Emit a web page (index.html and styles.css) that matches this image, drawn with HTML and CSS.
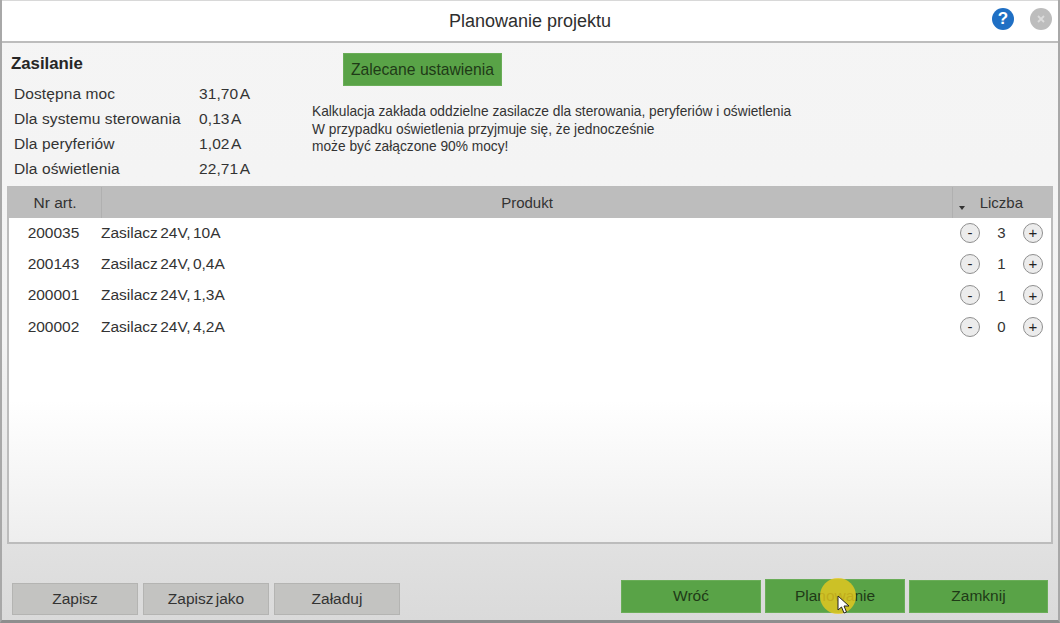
FILE: index.html
```html
<!DOCTYPE html>
<html lang="pl">
<head>
  <meta charset="UTF-8">
  <title>Planowanie projektu</title>
  <link rel="stylesheet" href="styles.css">
</head>
<body>
  <div class="window">
    <div class="titlebar">
      <span class="title">Planowanie projektu</span>
      <div class="title-icons">
        <span class="help-btn">?</span>
        <span class="close-btn">
          <svg width="12" height="12" viewBox="0 0 12 12"><path d="M3 3 L9 9 M9 3 L3 9" stroke="#dcdcdc" stroke-width="1.8"/></svg>
        </span>
      </div>
    </div>

    <div class="info">
      <div class="power">
        <h3>Zasilanie</h3>
        <div class="power-row"><span class="power-label">Dostępna moc</span><span class="power-value">31,70 A</span></div>
        <div class="power-row"><span class="power-label">Dla systemu sterowania</span><span class="power-value">0,13 A</span></div>
        <div class="power-row"><span class="power-label">Dla peryferiów</span><span class="power-value">1,02 A</span></div>
        <div class="power-row"><span class="power-label">Dla oświetlenia</span><span class="power-value">22,71 A</span></div>
      </div>
      <div class="notes">
        <button class="btn-green btn-recommended">Zalecane ustawienia</button>
        <p>Kalkulacja zakłada oddzielne zasilacze dla sterowania, peryferiów i oświetlenia<br>W przypadku oświetlenia przyjmuje się, że jednocześnie<br>może być załączone 90% mocy!</p>
      </div>
    </div>

    <div class="table">
      <div class="table-head">
        <div class="col-nr">Nr art.</div>
        <div class="col-product">Produkt</div>
        <div class="col-count"><span class="sort-arrow"></span>Liczba</div>
      </div>
      <div class="table-row">
        <div class="col-nr">200035</div>
        <div class="col-product">Zasilacz 24V, 10A</div>
        <div class="col-count"><span class="round-btn">-</span><span class="qty">3</span><span class="round-btn">+</span></div>
      </div>
      <div class="table-row">
        <div class="col-nr">200143</div>
        <div class="col-product">Zasilacz 24V, 0,4A</div>
        <div class="col-count"><span class="round-btn">-</span><span class="qty">1</span><span class="round-btn">+</span></div>
      </div>
      <div class="table-row">
        <div class="col-nr">200001</div>
        <div class="col-product">Zasilacz 24V, 1,3A</div>
        <div class="col-count"><span class="round-btn">-</span><span class="qty">1</span><span class="round-btn">+</span></div>
      </div>
      <div class="table-row">
        <div class="col-nr">200002</div>
        <div class="col-product">Zasilacz 24V, 4,2A</div>
        <div class="col-count"><span class="round-btn">-</span><span class="qty">0</span><span class="round-btn">+</span></div>
      </div>
    </div>

    <div class="footer">
      <div class="btn-group">
        <button class="btn-gray">Zapisz</button>
        <button class="btn-gray">Zapisz jako</button>
        <button class="btn-gray">Załaduj</button>
      </div>
      <div class="btn-group btn-group-main">
        <button class="btn-green btn-wide">Wróć</button>
        <button class="btn-green btn-wide btn-hover">Planowanie
          <span class="click-dot"></span>
          <svg class="cursor" width="14" height="20" viewBox="0 0 14 20"><path d="M1 1 L1 15 L4.5 12 L7 18 L9.5 17 L7 11 L12 11 Z" fill="#fff" stroke="#222" stroke-width="1"/></svg>
        </button>
        <button class="btn-green btn-wide btn-last">Zamknij</button>
      </div>
    </div>
  </div>
</body>
</html>
```

FILE: styles.css
```css
html, body { margin: 0; height: 100%; overflow: hidden; }
body { font-family: "Liberation Sans", Arial, sans-serif; font-size: 15.5px; color: #333; }
.window { height: 623px; box-sizing: border-box; display: flex; flex-direction: column; border-left: 2px solid #a8a8a8; border-right: 2px solid #a8a8a8; border-bottom: 3px solid #8e8e8e; background: linear-gradient(#f5f5f5, #f3f3f3 55%, #dadada); }
.titlebar { height: 40px; flex: none; display: flex; align-items: center; justify-content: center; position: relative; background: #fff; border-top: 1px solid #d8d8d8; border-bottom: 2px solid #bdbdbd; }
.title { font-size: 18px; color: #2e2e2e; }
.title-icons { position: absolute; right: 6px; top: 7px; display: flex; gap: 16px; }
.help-btn { width: 22px; height: 22px; border-radius: 50%; background: #1f6fc4; color: #fff; font-weight: bold; font-size: 17px; line-height: 22px; text-align: center; }
.close-btn { width: 22px; height: 22px; border-radius: 50%; background: #bdbdbd; display: flex; align-items: center; justify-content: center; }

.info { height: 143px; flex: none; display: flex; }
.power { width: 331px; flex: none; padding: 12px 0 0 9px; box-sizing: border-box; }
.power h3 { margin: 0 0 8px; font-size: 16.8px; line-height: 18px; color: #262626; }
.power-row { display: flex; height: 25px; align-items: center; padding-left: 3px; letter-spacing: 0.1px; }
.power-label { width: 185px; }
.power-value { word-spacing: -2px; }
.notes { display: flex; flex-direction: column; align-items: flex-start; padding-top: 10px; }
.btn-recommended { width: 159px; height: 33px; margin-left: 10px; font-size: 15.7px; word-spacing: 0; background: #5db04b; border-color: #6cba5b; }
.notes p { margin: 17px 0 0 -21px; font-size: 13.75px; line-height: 17.5px; color: #333; }

.table { height: 358px; flex: none; margin: 0 5px; box-sizing: border-box; border: 2px solid #bcbcbc; border-top: 1px solid #bcbcbc; background: linear-gradient(#fff, #fff 60%, #eeeeee); }
.table-head { height: 31px; margin-bottom: -1px; display: flex; align-items: center; background: #bdbdbd; }
.table-head .col-nr { height: 100%; line-height: 31px; border-right: 1px solid #b0b0b0; padding-right: 0; }
.table-head .col-product { text-align: center; height: 100%; line-height: 31px; margin-left: 0; font-size: 15px; }
.table-head .col-count { height: 100%; border-left: 1px solid #b0b0b0; position: relative; padding-right: 28px; font-size: 15px; }
.table-row { height: 31.3px; display: flex; align-items: center; }
.col-nr { width: 93px; flex: none; box-sizing: border-box; text-align: center; padding-right: 4px; }
.col-product { flex: 1; margin-left: -1px; word-spacing: -2px; }
.col-count { width: 99px; flex: none; box-sizing: border-box; display: flex; align-items: center; justify-content: flex-end; padding-right: 8px; }
.sort-arrow { position: absolute; left: 6px; bottom: 8px; border: 3.5px solid transparent; border-top: 4px solid #333; border-bottom: 0; }
.qty { width: 43px; text-align: center; font-size: 15px; }
.round-btn { width: 20px; height: 20px; box-sizing: border-box; border-radius: 50%; border: 1.5px solid #8f8f8f; background: #ececec; display: flex; align-items: center; justify-content: center; font-size: 15px; line-height: 1; color: #222; }

.footer { flex: 1; display: flex; justify-content: space-between; align-items: flex-end; padding: 0 10px 5px 10px; }
.btn-group { display: flex; gap: 5px; }
.btn-group-main { gap: 4px; align-items: center; margin-bottom: 2px; }
button { font-family: inherit; font-size: 15.5px; border: none; padding: 0; color: #333; word-spacing: -2px; }
.btn-gray { width: 126px; height: 32px; background: #c3c3c1; border: 1px solid #b4b4b2; box-sizing: border-box; }
.btn-green { background: #59a347; color: #1f3a17; border: 1px solid #6aad58; box-sizing: border-box; }
.btn-wide { width: 140px; height: 33px; position: relative; }
.btn-last { width: 139px; }
.btn-hover { height: 34px; }
.click-dot { position: absolute; left: 54px; top: -2px; width: 36px; height: 36px; border-radius: 50%; background: rgba(233, 200, 30, 0.8); }
.cursor { position: absolute; left: 71px; top: 15px; }
```
